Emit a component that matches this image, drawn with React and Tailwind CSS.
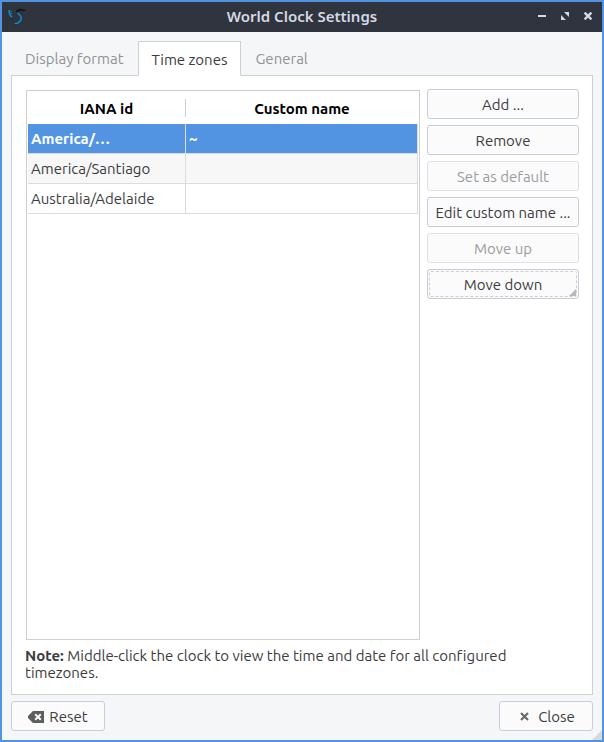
import React, { useState } from "react";

const tabs = [
  { id: "format", label: "Display format" },
  { id: "zones", label: "Time zones" },
  { id: "general", label: "General" },
];

const zones = [
  { id: "America/…", name: "~" },
  { id: "America/Santiago", name: "" },
  { id: "Australia/Adelaide", name: "" },
];

const actions = [
  { label: "Add ..." },
  { label: "Remove" },
  { label: "Set as default", disabled: true },
  { label: "Edit custom name ..." },
  { label: "Move up", disabled: true },
  { label: "Move down", focused: true },
];

const buttonClass =
  "relative flex h-[30px] items-center justify-center rounded-[3px] border bg-[#fbfbfc] pt-0.5";

function BirdLogo() {
  return (
    <svg className="h-5 w-5" viewBox="1 0 20 20" fill="none">
      <path d="M9 4.6 L10.5 2.8 L13 1.8 L19 3.4 L14 3.7 L11 4.2 L9.5 5.4" fill="#15171c" stroke="#15171c" strokeWidth="0.6" />
      <path d="M2 3 L2.2 6 L3.4 8.5 L5 10.2" stroke="#0d8fd0" strokeWidth="1.4" />
      <path d="M2.2 3.8 L4.6 4.8 M3 7 L5.2 6.4" stroke="#0b7fc0" strokeWidth="1.1" />
      <path d="M10.5 6 L13 8.2 L14.3 10.8 L13.6 13.6 L11 16 L7.5 16.6" stroke="#0d8fd0" strokeWidth="1.4" />
      <path d="M4 11 L6.5 14 M7 18.2 L10 17.5" stroke="#1d2632" strokeWidth="0.8" />
    </svg>
  );
}

function TitleBar() {
  return (
    <header className="grid h-[30px] grid-cols-[1fr_auto_1fr] items-center bg-[#2f343f] px-1.5 text-[#d3dae3]">
      <BirdLogo />
      <h1 className="pb-0.5 font-['Noto_Sans',sans-serif] text-[15px] leading-5 font-semibold">World Clock Settings</h1>
      <div className="flex items-center justify-end gap-[15px] pr-1 pb-0.5">
        <button aria-label="Minimize">
          <svg className="block h-2 w-2" viewBox="0 0 8 8" fill="currentColor">
            <path d="M0 3h8v2H0z" />
          </svg>
        </button>
        <button aria-label="Maximize">
          <svg className="block h-2 w-2" viewBox="0 0 8 8" fill="currentColor">
            <path d="M3 0h5v5zM0 3v5h5z" />
          </svg>
        </button>
        <button aria-label="Close window">
          <svg className="block h-2 w-2" viewBox="0 0 8 8" stroke="currentColor" strokeWidth="2.4">
            <path d="M.6 .6 7.4 7.4M7.4 .6.6 7.4" />
          </svg>
        </button>
      </div>
    </header>
  );
}

function ZoneTable({ selected, onSelect }) {
  return (
    <div className="m-px flex-1 border border-[#cdcfd1] bg-white p-px">
      <table className="w-full table-fixed border-separate border-spacing-0">
        <thead>
          <tr className="h-8 text-black">
            <th className="w-[158px] p-0 font-bold">
              <div className="h-[18px] border-r border-[#cdcfd1] leading-5">IANA id</div>
            </th>
            <th className="p-0 font-bold">
              <div className="h-[18px] leading-5">Custom name</div>
            </th>
          </tr>
        </thead>
        <tbody>
          {zones.map((zone, i) => {
            const isSelected = selected === i;
            return (
              <tr
                key={zone.id}
                onClick={() => onSelect(i)}
                className={`h-[30px] ${
                  isSelected ? "bg-[#5294e2] font-bold text-white" : i % 2 ? "bg-[#f7f7f7]" : "bg-white"
                }`}
              >
                <td className="truncate border-b border-r border-[#dcdcdc] px-[3px] py-0">{zone.id}</td>
                <td className="truncate border-b border-r border-[#dcdcdc] px-[3px] py-0">{zone.name}</td>
              </tr>
            );
          })}
        </tbody>
      </table>
    </div>
  );
}

function ActionButton({ label, disabled, focused }) {
  return (
    <button
      disabled={disabled}
      className={`${buttonClass} ${disabled ? "border-[#dde1ea] text-[#9a9b9d]" : "border-[#c8cddd]"}`}
    >
      {label}
      {focused && (
        <>
          <span className="absolute inset-px rounded-[2px] border border-dashed border-[#cfcfcf]"></span>
          <svg className="absolute bottom-0.5 right-0.5 h-[7px] w-[7px]" viewBox="0 0 7 7">
            <path d="M7 0v7H0z" fill="#b8b8b8" />
          </svg>
        </>
      )}
    </button>
  );
}

export default function App() {
  const [active, setActive] = useState("zones");
  const [selected, setSelected] = useState(0);

  return (
    <div className="relative flex min-h-screen flex-col border-2 border-[#5294e2] bg-[#f5f6f7] font-[Ubuntu,'Noto_Sans',sans-serif] text-[15px] leading-5 text-[#3b3c3e] [font-variant-ligatures:none]">
      <TitleBar />

      <main className="flex flex-1 flex-col p-[9px]">
        {/* Tabs */}
        <div role="tablist" className="flex h-[34px]">
          {tabs.map(({ id, label }) => (
            <button
              key={id}
              role="tab"
              aria-selected={active === id}
              onClick={() => setActive(id)}
              className={`border px-[13px] pt-0.5 ${
                active === id
                  ? "relative -mb-px border-[#cdcfd1] border-b-white bg-white"
                  : "border-transparent text-[#919294]"
              }`}
            >
              {label}
            </button>
          ))}
        </div>

        {/* Time zones page */}
        <section className="flex flex-1 flex-col gap-1.5 border border-[#cdcfd1] bg-white p-[13px]">
          <div className="flex flex-1 gap-1.5">
            <div className="flex min-w-0 flex-1 flex-col">
              <ZoneTable selected={selected} onSelect={setSelected} />
            </div>
            <div className="flex w-[152px] flex-col gap-1.5">
              {actions.map((action) => (
                <ActionButton key={action.label} {...action} />
              ))}
            </div>
          </div>
          <p className="pr-10 leading-[17px]">
            <b>Note:</b> Middle-click the clock to view the time and date for all configured timezones.
          </p>
        </section>

        <footer className="mt-1.5 flex justify-between">
          <button className={`${buttonClass} w-[94px] gap-[5px] border-[#c8cddd]`}>
            <svg className="h-3 w-4" viewBox="0 0 16 12">
              <path d="M5 0h11v12H5L0 7V5z" fill="#5c5d5f" />
              <path d="m7.2 3.2 5.6 5.6m0-5.6L7.2 8.8" stroke="#fbfbfc" strokeWidth="2" />
            </svg>
            Reset
          </button>
          <button className={`${buttonClass} w-[94px] gap-[5px] border-[#c8cddd]`}>
            <svg className="h-4 w-4" viewBox="0 0 16 16">
              <path d="m4 4 7 7m0-7-7 7" stroke="#6a6b6d" strokeWidth="2.2" />
            </svg>
            Close
          </button>
        </footer>
      </main>

      <svg className="absolute bottom-0 right-0 h-2.5 w-2.5" viewBox="0 0 10 10">
        <path d="M10 0v10H0z" fill="#d6d8da" />
      </svg>
    </div>
  );
}
